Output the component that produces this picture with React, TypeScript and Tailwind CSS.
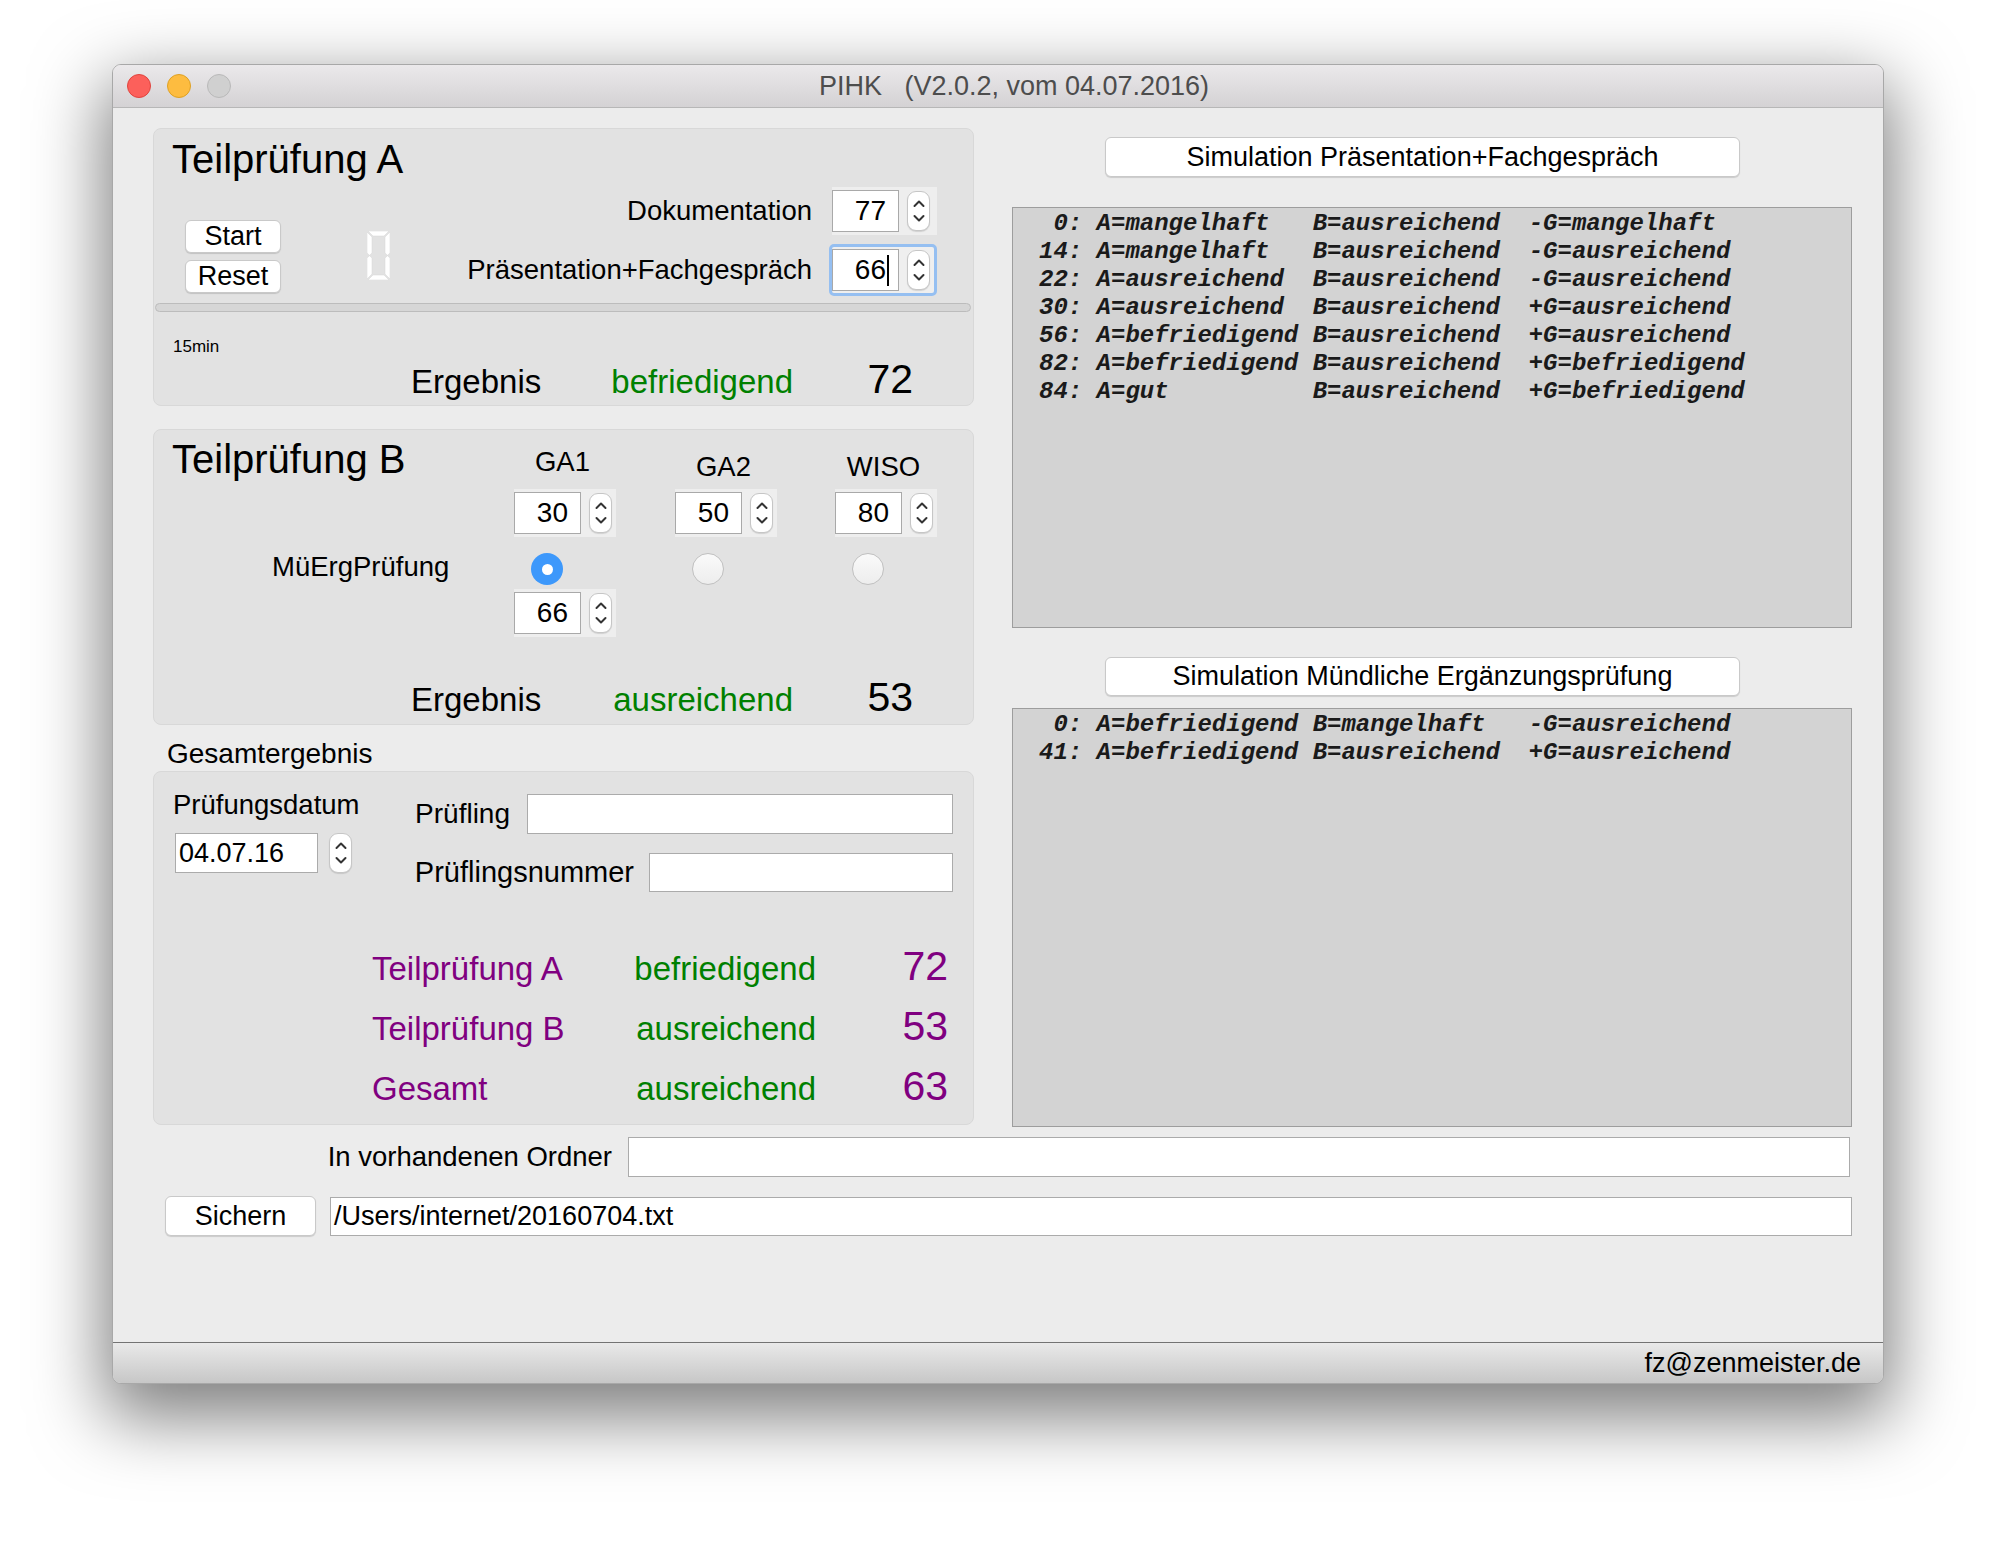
import React from "react";

type Kids = { children?: React.ReactNode; className?: string };

const Chevrons = () => (
  <svg width="12" height="28" viewBox="0 0 12 28" fill="none" stroke="#333333" strokeWidth="2" strokeLinecap="round" strokeLinejoin="round">
    <path d="M1.5 9 L6 4.5 L10.5 9" />
    <path d="M1.5 19 L6 23.5 L10.5 19" />
  </svg>
);

const Stepper = () => (
  <div className="flex h-[40px] w-[23px] items-center justify-center rounded-[9px] border border-[#c6c6c6] bg-white shadow-[0_1px_1px_rgba(0,0,0,0.12)]">
    <Chevrons />
  </div>
);

const Btn = ({ children, className }: Kids) => (
  <div className={`flex items-center justify-center rounded-[6px] border border-[#c9c9c9] bg-white text-[27px] leading-none text-black shadow-[0_1px_1px_rgba(0,0,0,0.14)] ${className ?? ""}`}>
    {children}
  </div>
);

const NumField = ({ value, focused, className }: { value: string; focused?: boolean; className?: string }) => {
  const field = (
    <div className={`flex h-[42px] w-[67px] items-center justify-end border border-[#a9a9a9] bg-white text-[28px] leading-none text-black ${focused ? "pr-[9px]" : "pr-[12px]"}`}>
      {value}
      {focused && <span className="ml-[1px] h-[31px] w-[2px] bg-black" />}
    </div>
  );
  if (focused) {
    return (
      <div className={`flex items-center gap-[8px] rounded-[5px] border-[3px] border-[#95bff1] bg-[#efefef] py-[2px] pr-[4px] ${className ?? ""}`}>
        {field}
        <Stepper />
      </div>
    );
  }
  return (
    <div className={`-my-[3px] flex items-center gap-[8px] bg-[#eeeeee] py-[3px] pr-[4px] ${className ?? ""}`}>
      {field}
      <Stepper />
    </div>
  );
};

const Radio = ({ on, className }: { on?: boolean; className?: string }) =>
  on ? (
    <div className={`flex h-[32px] w-[32px] items-center justify-center rounded-full bg-[#3d98fb] ${className ?? ""}`}>
      <div className="h-[11px] w-[11px] rounded-full bg-white" />
    </div>
  ) : (
    <div className={`h-[32px] w-[32px] rounded-full border border-[#c0c0c0] bg-gradient-to-b from-[#fafafa] to-[#ededed] ${className ?? ""}`} />
  );

const Lcd = ({ className }: { className?: string }) => (
  <svg className={className} width="23" height="49" viewBox="0 0 23 49" fill="#ffffff" stroke="#d6d6d6" strokeWidth="0.5">
    <polygon points="1,0 22,0 17,5 6,5" />
    <polygon points="1,49 22,49 17,44 6,44" />
    <polygon points="0,1 5,6 5,22 2.5,24.3 0,22" />
    <polygon points="0,27 2.5,24.7 5,27 5,43 0,48" />
    <polygon points="23,1 18,6 18,22 20.5,24.3 23,22" />
    <polygon points="23,27 20.5,24.7 18,27 18,43 23,48" />
  </svg>
);

const ResultRow = ({ label, grade, score, className }: { label: string; grade: string; score: string; className?: string }) => (
  <div className={`flex h-[40px] items-baseline pl-[257px] leading-[40px] ${className ?? ""}`}>
    <div className="w-[150px] text-[33px] text-black">{label}</div>
    <div className="w-[232px] text-right text-[33px] text-[#008000]">{grade}</div>
    <div className="w-[120px] text-right text-[41px] text-black">{score}</div>
  </div>
);

const TotalRow = ({ label, grade, score }: { label: string; grade: string; score: string }) => (
  <div className="flex h-[44px] items-baseline pl-[218px] leading-[44px]">
    <div className="w-[200px] text-[33px] text-[#800080]">{label}</div>
    <div className="w-[244px] text-right text-[33px] text-[#008000]">{grade}</div>
    <div className="w-[132px] text-right text-[41px] text-[#800080]">{score}</div>
  </div>
);

const Input = ({ children, className }: Kids) => (
  <div className={`flex items-center border border-[#ababab] bg-white pl-[3px] text-[27px] leading-none text-black ${className ?? ""}`}>
    {children}
  </div>
);

const SimLog = ({ lines, className }: { lines: string[]; className?: string }) => (
  <div className={`border border-[#9d9d9d] bg-[#d3d3d3] pl-[26px] pt-[2px] font-['Liberation_Mono','Courier_New',monospace] text-[24px] font-bold italic leading-[28px] text-[#1a1a1a] ${className ?? ""}`}>
    {lines.map((l) => (
      <div key={l} className="whitespace-pre">
        {l}
      </div>
    ))}
  </div>
);

const simPF = [
  " 0: A=mangelhaft   B=ausreichend  -G=mangelhaft",
  "14: A=mangelhaft   B=ausreichend  -G=ausreichend",
  "22: A=ausreichend  B=ausreichend  -G=ausreichend",
  "30: A=ausreichend  B=ausreichend  +G=ausreichend",
  "56: A=befriedigend B=ausreichend  +G=ausreichend",
  "82: A=befriedigend B=ausreichend  +G=befriedigend",
  "84: A=gut          B=ausreichend  +G=befriedigend",
];

const simME = [
  " 0: A=befriedigend B=mangelhaft   -G=ausreichend",
  "41: A=befriedigend B=ausreichend  +G=ausreichend",
];

const group = "rounded-[8px] border border-[#d8d8d8] bg-[#e2e2e2]";

export default function App() {
  return (
    <div className="min-h-[1544px] w-[1996px] bg-white pl-[112px] pt-[64px] font-['Liberation_Sans',Arial,sans-serif] text-black">
      <div className="flex h-[1320px] w-[1772px] flex-col overflow-hidden rounded-[9px] border border-[#a8a8a8] bg-[#ececec] shadow-[0_26px_70px_8px_rgba(0,0,0,0.5)]">
        {/* title bar */}
        <div className="grid h-[43px] grid-cols-[1fr_auto_1fr] items-center border-b border-[#b7b7b7] bg-gradient-to-b from-[#ebe9eb] to-[#d4d2d4]">
          <div className="flex items-center gap-[16px] pl-[14px]">
            <div className="h-[24px] w-[24px] rounded-full border border-[#e0443e] bg-[#fc605b]" />
            <div className="h-[24px] w-[24px] rounded-full border border-[#dea123] bg-[#fdbc40]" />
            <div className="h-[24px] w-[24px] rounded-full border border-[#b9b9b9] bg-[#d0d0d0]" />
          </div>
          <div className="whitespace-pre pl-[32px] text-[27px] leading-none text-[#4d4d4d]">PIHK   (V2.0.2, vom 04.07.2016)</div>
          <div />
        </div>

        {/* content */}
        <div className="flex flex-1 flex-col">
          <div className="flex pl-[40px] pt-[20px]">
            {/* left column */}
            <div className="flex w-[821px] flex-col">
              {/* Teilprüfung A */}
              <div className={`flex h-[278px] flex-col pt-[8px] ${group}`}>
                <div className="h-[44px] pl-[18px] text-[40px] leading-[44px]">Teilprüfung A</div>
                <div className="flex h-[116px]">
                  <div className="ml-[31px] mt-[39px] flex flex-col gap-[7px]">
                    <Btn className="h-[33px] w-[96px]">Start</Btn>
                    <Btn className="h-[33px] w-[96px]">Reset</Btn>
                  </div>
                  <Lcd className="ml-[86px] mt-[50px]" />
                  <div className="flex-1" />
                  <div className="mr-[36px] mt-[9px] flex flex-col items-end gap-[12px]">
                    <div className="flex items-center">
                      <div className="mr-[20px] text-[27.5px] leading-none">Dokumentation</div>
                      <NumField value="77" className="pr-[7px]" />
                    </div>
                    <div className="flex items-center">
                      <div className="mr-[17px] text-[27.5px] leading-none">Präsentation+Fachgespräch</div>
                      <NumField value="66" focused />
                    </div>
                  </div>
                </div>
                <div className="ml-[1px] mr-[2px] mt-[6px] h-[9px] rounded-full border border-[#bcbcbc] bg-[#d6d6d6]" />
                <div className="mt-[25px] pl-[19px] text-[17px] leading-[20px]">15min</div>
                <ResultRow label="Ergebnis" grade="befriedigend" score="72" className="mt-[2px]" />
              </div>

              {/* Teilprüfung B */}
              <div className={`mt-[23px] flex h-[296px] flex-col ${group}`}>
                <div className="flex">
                  <div className="flex w-[360px] flex-col">
                    <div className="mt-[7px] h-[44px] pl-[18px] text-[40px] leading-[44px]">Teilprüfung B</div>
                    <div className="mt-[71px] h-[30px] pl-[118px] text-[27.5px] leading-[30px]">MüErgPrüfung</div>
                  </div>
                  <div className="flex w-[161px] flex-col pt-[17px]">
                    <div className="h-[30px] w-[97px] text-center text-[27.5px] leading-[30px]">GA1</div>
                    <NumField value="30" className="mt-[12px] self-start" />
                    <Radio on className="ml-[17px] mt-[19px]" />
                    <NumField value="66" className="mt-[4px] self-start" />
                  </div>
                  <div className="flex w-[160px] flex-col pt-[22px]">
                    <div className="h-[30px] w-[97px] text-center text-[27.5px] leading-[30px]">GA2</div>
                    <NumField value="50" className="mt-[7px] self-start" />
                    <Radio className="ml-[17px] mt-[19px]" />
                  </div>
                  <div className="flex flex-col pt-[22px]">
                    <div className="h-[30px] w-[97px] text-center text-[27.5px] leading-[30px]">WISO</div>
                    <NumField value="80" className="mt-[7px] self-start" />
                    <Radio className="ml-[17px] mt-[19px]" />
                  </div>
                </div>
                <ResultRow label="Ergebnis" grade="ausreichend" score="53" className="mt-[43px]" />
              </div>

              <div className="mt-[13px] h-[32px] pl-[14px] text-[28px] leading-[32px]">Gesamtergebnis</div>

              {/* Gesamt */}
              <div className={`mt-[1px] flex h-[354px] flex-col ${group}`}>
                <div className="flex h-[118px] items-start">
                  <div className="flex flex-col pl-[21px] pt-[18px]">
                    <div className="-ml-[2px] h-[30px] text-[27.5px] leading-[30px]">Prüfungsdatum</div>
                    <div className="mt-[13px] flex items-center gap-[11px]">
                      <Input className="h-[40px] w-[143px]">04.07.16</Input>
                      <Stepper />
                    </div>
                  </div>
                  <div className="flex-1" />
                  <div className="flex flex-col items-end gap-[19px] pr-[20px] pt-[22px]">
                    <div className="flex items-center">
                      <div className="mr-[17px] text-[28px] leading-none">Prüfling</div>
                      <Input className="h-[40px] w-[426px]" />
                    </div>
                    <div className="flex items-center">
                      <div className="mr-[15px] text-[29px] leading-none">Prüflingsnummer</div>
                      <Input className="h-[39px] w-[304px]" />
                    </div>
                  </div>
                </div>
                <div className="mt-[54px] flex flex-col gap-[16px]">
                  <TotalRow label="Teilprüfung A" grade="befriedigend" score="72" />
                  <TotalRow label="Teilprüfung B" grade="ausreichend" score="53" />
                  <TotalRow label="Gesamt" grade="ausreichend" score="63" />
                </div>
              </div>
            </div>

            {/* right column */}
            <div className="ml-[38px] mt-[9px] flex w-[840px] flex-col">
              <Btn className="ml-[93px] h-[40px] w-[635px]">Simulation Präsentation+Fachgespräch</Btn>
              <SimLog lines={simPF} className="mt-[30px] h-[421px]" />
              <Btn className="ml-[93px] mt-[29px] h-[39px] w-[635px]">Simulation Mündliche Ergänzungsprüfung</Btn>
              <SimLog lines={simME} className="mt-[12px] h-[419px]" />
            </div>
          </div>

          {/* bottom rows */}
          <div className="mt-[10px] flex items-center">
            <div className="w-[499px] text-right text-[27.5px] leading-none">In vorhandenen Ordner</div>
            <Input className="ml-[16px] h-[40px] w-[1222px]" />
          </div>
          <div className="mt-[19px] flex items-center pl-[52px]">
            <Btn className="h-[40px] w-[151px]">Sichern</Btn>
            <Input className="ml-[14px] h-[39px] w-[1522px]">/Users/internet/20160704.txt</Input>
          </div>
        </div>

        {/* footer */}
        <div className="flex h-[41px] items-center justify-end border-t border-[#737373] bg-gradient-to-b from-[#e9e9e9] to-[#c7c7c7] pr-[22px] text-[27px] leading-none">
          fz@zenmeister.de
        </div>
      </div>
    </div>
  );
}
